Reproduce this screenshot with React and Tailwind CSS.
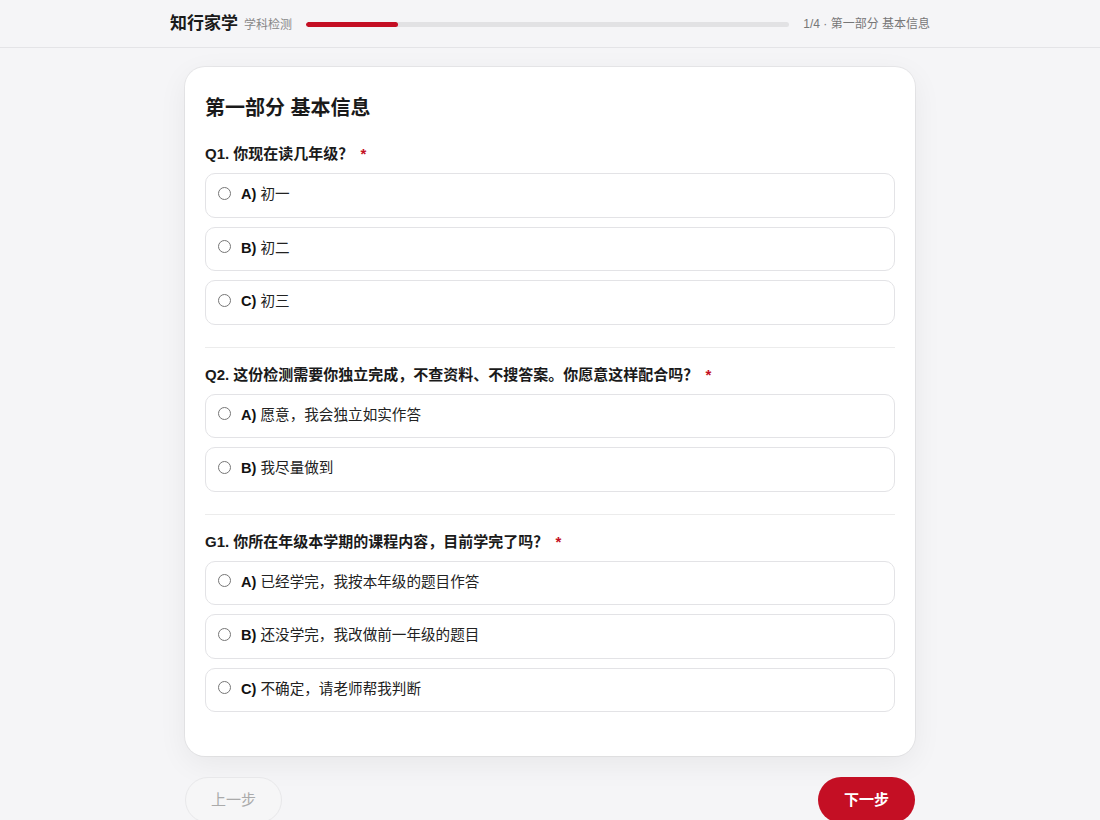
import React from 'react';

const sections = [
  {
    id: 'Q1',
    title: '你现在读几年级？',
    options: [
      ['A)', '初一'],
      ['B)', '初二'],
      ['C)', '初三'],
    ],
  },
  {
    id: 'Q2',
    title: '这份检测需要你独立完成，不查资料、不搜答案。你愿意这样配合吗？',
    options: [
      ['A)', '愿意，我会独立如实作答'],
      ['B)', '我尽量做到'],
    ],
  },
  {
    id: 'G1',
    title: '你所在年级本学期的课程内容，目前学完了吗？',
    options: [
      ['A)', '已经学完，我按本年级的题目作答'],
      ['B)', '还没学完，我改做前一年级的题目'],
      ['C)', '不确定，请老师帮我判断'],
    ],
  },
];

const Question = ({ q, last }) => (
  <div className={last ? '' : 'border-b border-[#ececec] pb-[22px] mb-[17px]'}>
    <div className="text-[15px] font-bold text-[#1a1a1a] leading-[20px] mb-[9px]">
      {q.id}. {q.title} <span className="text-[#c40f24] ml-[3px]">*</span>
    </div>
    <div className="flex flex-col gap-[9px]">
      {q.options.map(([letter, text]) => (
        <label
          key={letter}
          className="flex items-center h-[44.5px] px-[12px] border border-[#e3e3e6] rounded-[10px] bg-white cursor-pointer"
        >
          <input type="radio" name={q.id} className="w-[13px] h-[13px] m-0 mb-[4px] accent-[#c40f24]" />
          <span className="ml-[10px] text-[14.6px] text-[#222]">
            <span className="font-bold text-[#111]">{letter}</span> {text}
          </span>
        </label>
      ))}
    </div>
  </div>
);

export default function App() {
  return (
    <div
      className="min-h-screen bg-[#f5f5f7] text-[#1a1a1a]"
      style={{ fontFamily: '"Liberation Sans", "Noto Sans CJK SC", sans-serif' }}
    >
      {/* Header */}
      <div className="h-[48px] border-b border-[#e4e4e7] bg-[#f5f5f7]">
        <div className="w-[760px] mx-auto h-full flex items-center pt-[1px]">
          <div className="text-[17px] font-bold text-[#1a1a1a]">知行家学</div>
          <div className="text-[12px] text-[#888] ml-[6px] mt-[2px]">学科检测</div>
          <div className="flex-1 h-[5px] bg-[#e2e2e4] rounded-full mx-[14px] overflow-hidden">
            <div className="h-full w-[19%] bg-[#c40f24] rounded-full" />
          </div>
          <div className="text-[12px] text-[#777]">1/4 · 第一部分 基本信息</div>
        </div>
      </div>

      {/* Card */}
      <div className="w-[730px] mx-auto pt-[19px]">
        <div className="bg-white rounded-[20px] shadow-[0_0_0_1px_rgba(0,0,0,0.05),0_8px_30px_rgba(0,0,0,0.06)] px-[20px] pt-[27px] pb-[44px]">
          <h1 className="text-[20px] font-bold text-[#1a1a1a] leading-[28px] mb-[22px]">第一部分 基本信息</h1>
          {sections.map((q, i) => (
            <Question key={q.id} q={q} last={i === sections.length - 1} />
          ))}
        </div>

        {/* Nav */}
        <div className="flex justify-between mt-[21px]">
          <button className="w-[97px] h-[46px] rounded-full border border-[#e8e8ea] bg-[#f6f6f7] text-[15px] text-[#aaa]">
            上一步
          </button>
          <button className="w-[97px] h-[46px] rounded-full bg-[#c40f24] text-[15px] font-bold text-white">
            下一步
          </button>
        </div>
      </div>
    </div>
  );
}
